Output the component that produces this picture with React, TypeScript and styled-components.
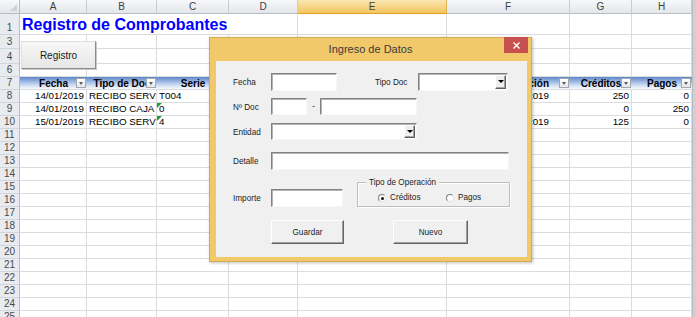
import styled, { createGlobalStyle } from 'styled-components'

type Align = 'left' | 'right' | 'center'

interface CellData {
  text: string
  align?: Align
  inset?: number
  flag?: boolean
}

const GlobalStyle = createGlobalStyle`
  html, body {
    margin: 0;
    padding: 0;
    background: #fff;
  }
  body {
    font-family: 'Liberation Sans', Arial, sans-serif;
    overflow: hidden;
  }
`

const COLUMNS = ['A', 'B', 'C', 'D', 'E', 'F', 'G', 'H']
const COLUMN_WIDTHS = [67, 70, 72, 69, 149, 123, 62, 60]
const ACTIVE_COLUMN = 'E'

const ROW_HEIGHTS: Record<number, number> = { 1: 21, 3: 14, 4: 15, 6: 13, 7: 13 }
const ROW_NUMBERS = [1, 3, 4, 6, 7, ...Array.from({ length: 18 }, (_, i) => i + 8)]

// D and E headers sit entirely under the dialog
const TABLE_HEADERS = ['Fecha', 'Tipo de Doc', 'Serie', '', '', 'Fecha Operación', 'Créditos', 'Pagos']

const DATA: Record<number, (CellData | null)[]> = {
  8: [
    { text: '14/01/2019', align: 'right' },
    { text: 'RECIBO SERVICIO' },
    { text: 'T004' },
    null,
    null,
    { text: '14/01/2019', align: 'right', inset: 20 },
    { text: '250', align: 'right' },
    { text: '0', align: 'right' }
  ],
  9: [
    { text: '14/01/2019', align: 'right' },
    { text: 'RECIBO CAJA' },
    { text: '0', flag: true },
    null,
    null,
    null,
    { text: '0', align: 'right' },
    { text: '250', align: 'right' }
  ],
  10: [
    { text: '15/01/2019', align: 'right' },
    { text: 'RECIBO SERVICIO' },
    { text: '4', flag: true },
    null,
    null,
    { text: '15/01/2019', align: 'right', inset: 20 },
    { text: '125', align: 'right' },
    { text: '0', align: 'right' }
  ]
}

const App = () => {
  const rowTemplate = ['14px', ...ROW_NUMBERS.map(n => `${ROW_HEIGHTS[n] ?? 13}px`)].join(' ')
  const colTemplate = ['20px', ...COLUMN_WIDTHS.map(w => `${w}px`)].join(' ')

  return (
    <>
      <GlobalStyle />
      <Screen>
        <Sheet $rows={rowTemplate} $cols={colTemplate}>
          <Corner />
          {COLUMNS.map(col => (
            <ColHead key={col} $active={col === ACTIVE_COLUMN}>{col}</ColHead>
          ))}

          {ROW_NUMBERS.map(row => {
            if (row === 1) {
              return [
                <RowHead key="h1">1</RowHead>,
                <Cell key="t1" $span={4}>
                  <SheetTitle>Registro de Comprobantes</SheetTitle>
                </Cell>,
                ...COLUMNS.slice(4).map(col => <Cell key={`1${col}`} />)
              ]
            }
            if (row === 7) {
              return [
                <RowHead key="h7">7</RowHead>,
                ...TABLE_HEADERS.map((label, i) => (
                  <HeadCell key={`7${COLUMNS[i]}`}>
                    {label}
                    <FilterButton />
                  </HeadCell>
                ))
              ]
            }
            const values = DATA[row] ?? []
            return [
              <RowHead key={`h${row}`}>{row}</RowHead>,
              ...COLUMNS.map((col, i) => {
                const value = values[i]
                return (
                  <Cell key={`${row}${col}`} $align={value?.align} $inset={value?.inset}>
                    {value?.flag && <ErrorFlag />}
                    {value?.text}
                  </Cell>
                )
              })
            ]
          })}
        </Sheet>
        <ScrollTrack />

        <SheetButton>Registro</SheetButton>

        <Dialog>
          <TitleBar>
            <Title>Ingreso de Datos</Title>
            <CloseButton>
              <svg width="7" height="7" viewBox="0 0 7 7">
                <path d="M0.5 0.5 L6.5 6.5 M6.5 0.5 L0.5 6.5" stroke="#fff" strokeWidth="1.4" />
              </svg>
            </CloseButton>
          </TitleBar>
          <Client>
            <FormRow $top={0} $h={18}>
              <FieldLabel>Fecha</FieldLabel>
              <TextBox $w={66} />
              <FieldLabel $w={43} $gap={38}>Tipo Doc</FieldLabel>
              <ComboBox $w={90}>
                <DropButton />
              </ComboBox>
            </FormRow>
            <FormRow $top={7} $h={17}>
              <FieldLabel>Nº Doc</FieldLabel>
              <TextBox $w={36} />
              <Dash>-</Dash>
              <TextBox $w={97} />
            </FormRow>
            <FormRow $top={8} $h={17}>
              <FieldLabel>Entidad</FieldLabel>
              <ComboBox $w={146}>
                <DropButton />
              </ComboBox>
            </FormRow>
            <FormRow $top={12} $h={18}>
              <FieldLabel>Detalle</FieldLabel>
              <TextBox $w={238} />
            </FormRow>
            <FormRow $top={12} $h={25} $bottom>
              <FieldLabel $low>Importe</FieldLabel>
              <TextBox $w={72} $h={18} />
              <OptionFrame>
                <FrameCaption>Tipo de Operación</FrameCaption>
                <Option $w={68}>
                  <Radio $checked />
                  Créditos
                </Option>
                <Option>
                  <Radio />
                  Pagos
                </Option>
              </OptionFrame>
            </FormRow>
            <FormRow $top={13} $h={24}>
              <CommandButton $w={73} $gap={38}>Guardar</CommandButton>
              <CommandButton $w={75} $gap={49}>Nuevo</CommandButton>
            </FormRow>
          </Client>
        </Dialog>
      </Screen>
    </>
  )
}

export default App

const Screen = styled.div`
  position: relative;
  width: 696px;
  height: 317px;
  overflow: hidden;
  display: flex;
  background: #fff;
`

const Sheet = styled.div<{ $rows: string; $cols: string }>`
  display: grid;
  grid-template-columns: ${p => p.$cols};
  grid-template-rows: ${p => p.$rows};
  align-content: start;
  flex: none;
`

const ScrollTrack = styled.div`
  width: 4px;
  height: 100%;
  background: #cfd1d4;
  border-left: 1px solid #b8bbbf;
  box-sizing: border-box;
`

const Corner = styled.div`
  position: relative;
  box-sizing: border-box;
  background: linear-gradient(#f7f8fa, #e3e6ea);
  border-right: 1px solid #b9bec5;
  border-bottom: 1px solid #b9bec5;

  &::after {
    content: '';
    position: absolute;
    right: 2px;
    bottom: 2px;
    border-left: 7px solid transparent;
    border-bottom: 7px solid #d0d3d8;
  }
`

const ColHead = styled.div<{ $active?: boolean }>`
  box-sizing: border-box;
  background: ${p => (p.$active ? 'linear-gradient(#fae7b2, #f2c55f)' : 'linear-gradient(#f7f8fa, #e3e6ea)')};
  border-right: 1px solid ${p => (p.$active ? '#e2b04e' : '#c9ccd1')};
  border-bottom: 1px solid ${p => (p.$active ? '#e49c2c' : '#b9bec5')};
  color: #3d3d3d;
  font-size: 10px;
  line-height: 13px;
  text-align: center;
`

const RowHead = styled.div`
  box-sizing: border-box;
  display: flex;
  align-items: flex-end;
  justify-content: center;
  background: #e8ebef;
  border-right: 1px solid #b9bec5;
  border-bottom: 1px solid #d2d5da;
  color: #4a4a4a;
  font-size: 10px;
  line-height: 12px;
  overflow: hidden;
`

const Cell = styled.div<{ $align?: Align; $span?: number; $inset?: number }>`
  position: relative;
  grid-column: span ${p => p.$span ?? 1};
  box-sizing: border-box;
  border-right: 1px solid #dadcdd;
  border-bottom: 1px solid #dadcdd;
  padding: 0 ${p => p.$inset ?? 2}px 0 2px;
  overflow: hidden;
  white-space: nowrap;
  font-size: 9.8px;
  line-height: 12px;
  color: #000;
  text-align: ${p => p.$align ?? 'left'};
`

const SheetTitle = styled.div`
  padding-top: 1px;
  font-size: 16px;
  line-height: 20px;
  font-weight: bold;
  color: #0000ff;
`

const ErrorFlag = styled.span`
  position: absolute;
  left: 0;
  top: 0;
  border-top: 5px solid #1e9a3a;
  border-right: 5px solid transparent;
`

const HeadCell = styled.div`
  position: relative;
  box-sizing: border-box;
  background: linear-gradient(#5d86c7 0%, #9fbbe5 40%, #d9e4f5 75%, #f5f8fd 100%);
  border-bottom: 1px solid #dadcdd;
  font-size: 10px;
  font-weight: bold;
  line-height: 13px;
  text-align: center;
  white-space: nowrap;
  overflow: hidden;
  color: #000;
`

const FilterButton = styled.span`
  position: absolute;
  right: 1px;
  top: 1px;
  width: 10px;
  height: 10px;
  box-sizing: border-box;
  border: 1px solid #a3a8b0;
  background: linear-gradient(#ffffff, #e4e7eb);

  &::after {
    content: '';
    position: absolute;
    left: 2px;
    top: 3px;
    border-left: 2.5px solid transparent;
    border-right: 2.5px solid transparent;
    border-top: 3px solid #5b5b5b;
  }
`

const SheetButton = styled.div`
  position: absolute;
  left: 21px;
  top: 41px;
  width: 75px;
  height: 28px;
  box-sizing: border-box;
  background: linear-gradient(#f8f8f8, #e6e6e6);
  border-top: 1px solid #dedede;
  border-left: 1px solid #dedede;
  border-right: 1px solid #8c8c8c;
  border-bottom: 1px solid #8c8c8c;
  box-shadow: 1px 1px 0 #c8c8c8;
  display: flex;
  align-items: center;
  justify-content: center;
  font-size: 10px;
  color: #1a1a1a;
`

const Dialog = styled.div`
  position: absolute;
  left: 209px;
  top: 37px;
  width: 323px;
  height: 225px;
  box-sizing: border-box;
  border: 1px solid #d6aa50;
  background: #f1c96b;
  box-shadow: 1px 1px 3px rgba(0, 0, 0, 0.25);
  display: flex;
  flex-direction: column;
`

const TitleBar = styled.div`
  height: 23px;
  flex: none;
  display: grid;
  grid-template-columns: 30px 1fr 30px;
`

const Title = styled.div`
  grid-column: 2;
  text-align: center;
  font-size: 11px;
  line-height: 23px;
  color: #3b3b3b;
`

const CloseButton = styled.div`
  justify-self: end;
  align-self: start;
  margin: -1px 3px 0 0;
  width: 24px;
  height: 16px;
  background: #c75050;
  display: flex;
  align-items: center;
  justify-content: center;
`

const Client = styled.div`
  flex: 1;
  margin: 0 4px 4px 6px;
  padding: 12px 0 0 17px;
  background: #f0f0f0;
  display: flex;
  flex-direction: column;
  font-size: 8.2px;
  color: #1c1c1c;
`

const FormRow = styled.div<{ $top: number; $h: number; $bottom?: boolean }>`
  display: flex;
  align-items: ${p => (p.$bottom ? 'flex-end' : 'center')};
  height: ${p => p.$h}px;
  margin-top: ${p => p.$top}px;
`

const FieldLabel = styled.span<{ $w?: number; $gap?: number; $low?: boolean }>`
  flex: none;
  width: ${p => p.$w ?? 38}px;
  margin-left: ${p => p.$gap ?? 0}px;
  padding-top: 2px;
  line-height: ${p => (p.$low ? '16px' : '12px')};
  white-space: nowrap;
`

const TextBox = styled.div<{ $w: number; $h?: number }>`
  flex: none;
  width: ${p => p.$w}px;
  height: ${p => (p.$h ? `${p.$h}px` : '100%')};
  box-sizing: border-box;
  background: #fff;
  border-top: 1px solid #828282;
  border-left: 1px solid #828282;
  border-right: 1px solid #f7f7f7;
  border-bottom: 1px solid #f7f7f7;
  box-shadow: inset 1px 1px 0 #b4b4b4;
`

const ComboBox = styled(TextBox)`
  display: flex;
  justify-content: flex-end;
  padding: 1px 1px 1px 0;
`

const DropButton = styled.span`
  position: relative;
  width: 11px;
  height: 100%;
  box-sizing: border-box;
  background: #efefef;
  border-top: 1px solid #fff;
  border-left: 1px solid #fff;
  border-right: 1px solid #5f5f5f;
  border-bottom: 1px solid #5f5f5f;
  box-shadow: inset -1px -1px 0 #a5a5a5;

  &::after {
    content: '';
    position: absolute;
    left: 2px;
    top: 50%;
    margin-top: -2px;
    border-left: 3px solid transparent;
    border-right: 3px solid transparent;
    border-top: 3px solid #000;
  }
`

const Dash = styled.span`
  flex: none;
  width: 13px;
  text-align: center;
  line-height: 12px;
`

const OptionFrame = styled.div`
  position: relative;
  flex: none;
  margin-left: 14px;
  width: 153px;
  height: 25px;
  box-sizing: border-box;
  border: 1px solid #bdbdbd;
  box-shadow: inset 1px 1px 0 #fff, 1px 1px 0 #fff;
  display: flex;
  align-items: flex-end;
  padding: 0 0 3px 20px;
`

const FrameCaption = styled.span`
  position: absolute;
  top: -6px;
  left: 8px;
  padding: 0 3px;
  background: #f0f0f0;
  line-height: 11px;
  white-space: nowrap;
`

const Option = styled.span<{ $w?: number }>`
  display: flex;
  align-items: center;
  gap: 4px;
  width: ${p => (p.$w ? `${p.$w}px` : 'auto')};
  line-height: 10px;
  white-space: nowrap;
`

const Radio = styled.span<{ $checked?: boolean }>`
  position: relative;
  flex: none;
  width: 8px;
  height: 8px;
  box-sizing: border-box;
  border-radius: 50%;
  background: #fff;
  border: 1px solid;
  border-color: #7e7e7e #e2e2e2 #e2e2e2 #7e7e7e;

  &::after {
    content: '';
    display: ${p => (p.$checked ? 'block' : 'none')};
    position: absolute;
    left: 1.5px;
    top: 1.5px;
    width: 3px;
    height: 3px;
    border-radius: 50%;
    background: #111;
  }
`

const CommandButton = styled.div<{ $w: number; $gap: number }>`
  flex: none;
  width: ${p => p.$w}px;
  height: 100%;
  margin-left: ${p => p.$gap}px;
  box-sizing: border-box;
  background: #f0f0f0;
  border-top: 1px solid #fff;
  border-left: 1px solid #fff;
  border-right: 1px solid #646464;
  border-bottom: 1px solid #646464;
  box-shadow: inset -1px -1px 0 #a0a0a0;
  display: flex;
  align-items: center;
  justify-content: center;
  color: #1c1c1c;
`
